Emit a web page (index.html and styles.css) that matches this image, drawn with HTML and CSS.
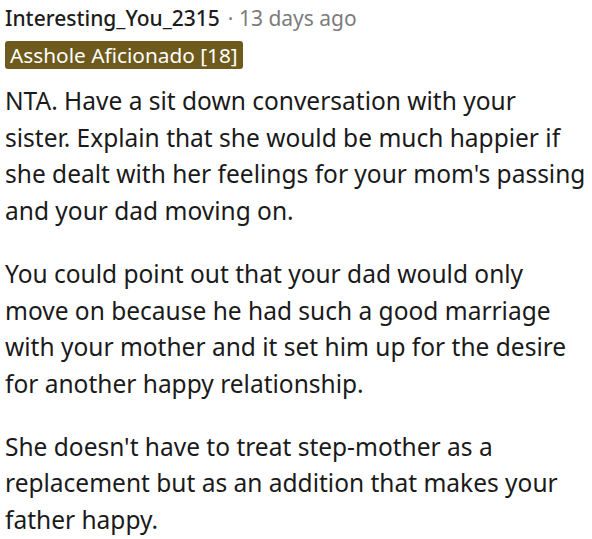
FILE: index.html
```html
<!DOCTYPE html>
<html>
<head>
<meta charset="utf-8">
<link rel="stylesheet" href="styles.css">
</head>
<body>
<div class="comment">
  <div class="meta">
    <span class="user">Interesting_You_2315</span>
    <span class="time">· 13 days ago</span>
  </div>
  <div class="flair-row">
    <span class="flair">Asshole Aficionado [18]</span>
  </div>
  <div class="body">
    <p>NTA. Have a sit down conversation with your sister. Explain that she would be much happier if she dealt with her feelings for your mom's passing and your dad moving on.</p>
    <p>You could point out that your dad would only move on because he had such a good marriage with your mother and it set him up for the desire for another happy relationship.</p>
    <p>She doesn't have to treat step-mother as a replacement but as an addition that makes your father happy.</p>
  </div>
</div>
</body>
</html>
```
FILE: styles.css
```css
html, body {
  margin: 0;
  padding: 0;
  background: #ffffff;
}
.comment {
  padding: 4px 5px 0 5px;
  font-family: "Noto Sans", "Open Sans", sans-serif;
  color: #1a1a1b;
}
.meta {
  font-size: 21px;
  line-height: 28px;
  display: flex;
  gap: 8px;
}
.user {
  font-weight: 500;
  color: #1c1c1c;
}
.time {
  color: #7c7c7c;
}
.flair-row {
  display: flex;
  margin-top: 9px;
}
.flair {
  background: #6d5a1c;
  color: #ffffff;
  font-size: 20.8px;
  line-height: 28px;
  padding: 0 5px;
  border-radius: 3px;
}
.body {
  font-size: 24.5px;
  line-height: 36.7px;
  margin-top: 14px;
}
.body p {
  margin: 0 0 26px 0;
}
```
